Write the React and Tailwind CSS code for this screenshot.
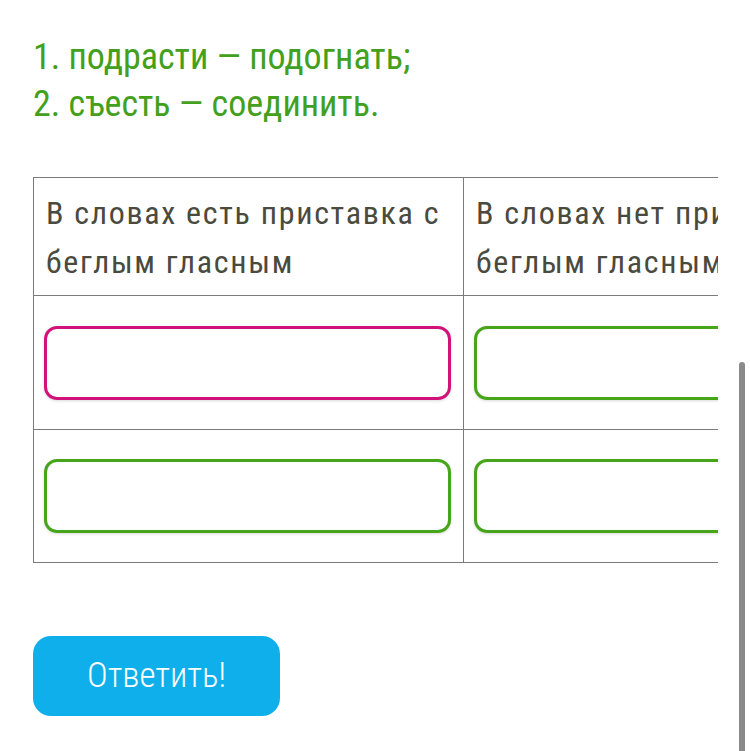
function Box({ color }) {
  return (
    <div
      className={
        "h-[74px] w-[407px] rounded-[13px] border-[3px] shadow-[0_1px_3px_rgba(0,0,0,0.15)] " +
        (color === "pink" ? "border-[#d0137a]" : "border-[#47a51a]")
      }
    />
  );
}

export default function App() {
  const cell = "border border-[#7b7b7b] px-[10px] align-middle";
  const head =
    "w-[430px] border border-[#7b7b7b] align-top px-[12px] pt-[11px] text-[32px] leading-[49px] tracking-[1.7px] text-[#4a4a3e]";
  return (
    <div className="relative w-[750px] h-[751px] bg-white overflow-hidden font-['Roboto'] font-stretch-condensed">
      <div className="pt-[34px] pl-[33px]">
        <div className="text-[36px] leading-[47px] text-[#43a01c]">
          <div>1. подрасти — подогнать;</div>
          <div>2. съесть — соединить.</div>
        </div>
        <div className="mt-[49px] w-[685px] overflow-hidden">
          <table className="border-collapse w-[860px] table-fixed">
            <tbody>
              <tr className="h-[118px]">
                <td className={head}>В словах есть приставка с беглым гласным</td>
                <td className={head}>
                  <div className="whitespace-nowrap">В словах нет приставки с</div>
                  <div>беглым гласным</div>
                </td>
              </tr>
              <tr className="h-[134px]">
                <td className={cell}>
                  <Box color="pink" />
                </td>
                <td className={cell}>
                  <Box color="green" />
                </td>
              </tr>
              <tr className="h-[133px]">
                <td className={cell}>
                  <Box color="green" />
                </td>
                <td className={cell}>
                  <Box color="green" />
                </td>
              </tr>
            </tbody>
          </table>
        </div>
        <button className="mt-[73px] w-[247px] h-[80px] rounded-[18px] bg-[#0eafea] text-white text-[35px] font-light">
          Ответить!
        </button>
      </div>
      <div className="absolute left-[739px] top-[362px] w-[6px] h-[400px] rounded-t-[3px] bg-[#8a8a8a]" />
    </div>
  );
}
